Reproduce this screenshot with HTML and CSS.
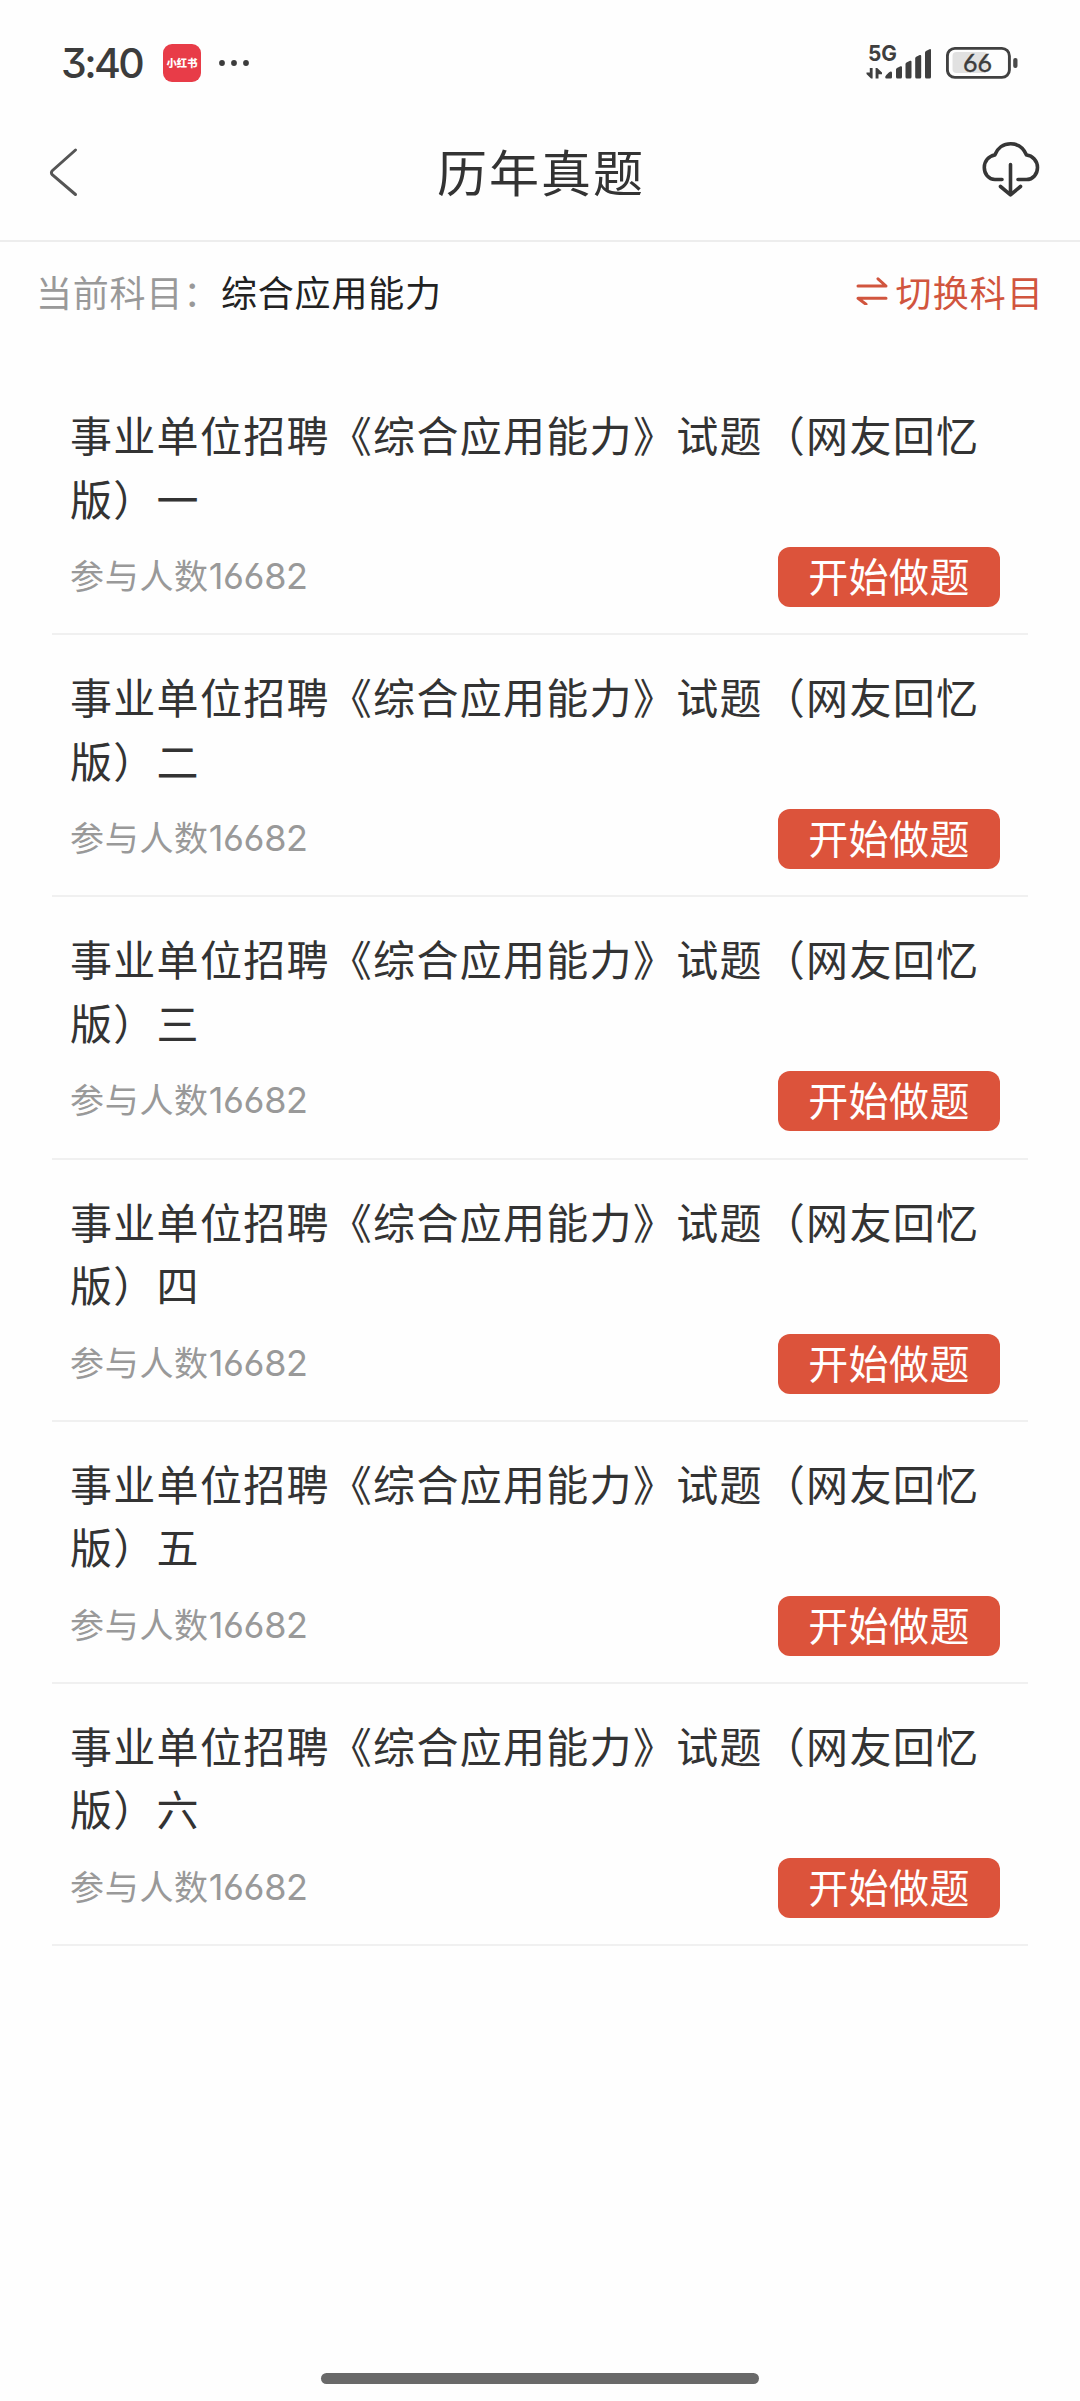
FILE: index.html
```html
<!DOCTYPE html>
<html lang="zh-CN">
<head>
<meta charset="utf-8">
<title>历年真题</title>
<link rel="stylesheet" href="styles.css">
</head>
<body>
<div class="status">
  <span class="time">3:40</span>
  <span class="app-badge">小红书</span>
  <svg class="dots" width="32" height="8" viewBox="0 0 32 8" fill="#3c3c3c"><circle cx="4" cy="4" r="2.9"/><circle cx="16" cy="4" r="2.9"/><circle cx="28" cy="4" r="2.9"/></svg>
  <svg class="signal" width="68" height="47" viewBox="0 0 68 47" fill="#3f3f3f">
    <text class="net" x="2" y="21" textLength="29" lengthAdjust="spacingAndGlyphs">5G</text>
    <path d="M3.800 28h2.800v10.500H5L.5 34v-1.500h3.300zM9.600 38.500V28h1.600l4.800 4.500v1.700h-3.500v4.300z"/>
    <path d="M19.200 37c0-1 4-5.500 5.500-5.500q1.300 0 1.300 1.300v4.400q0 1.300-1.300 1.300h-4.200q-1.300 0-1.300-1.500zM30 29.500q0-1 1-1.600l3.500-1.600q1.500-.5 1.500 1v9.700q0 1.500-1.500 1.500h-3q-1.500 0-1.500-1.500zM39.500 24q0-1 1-1.600l3.500-1.600q1.500-.5 1.500 1v15.200q0 1.500-1.500 1.500h-3q-1.500 0-1.500-1.500zM49.200 18.300q0-1 1-1.600l3.500-1.600q1.500-.5 1.500 1v20.900q0 1.500-1.500 1.500h-3q-1.500 0-1.500-1.500zM59 12.700q0-1 1-1.600l3.500-1.900q1.500-.5 1.500 1V37q0 1.500-1.500 1.500h-3q-1.500 0-1.500-1.500z"/>
  </svg>
  <svg class="battery" width="74" height="34" viewBox="0 0 74 34">
    <rect x="6.500" y="6" width="35" height="21" rx="4" fill="#e1e1e1"/>
    <rect x="1.400" y="2.400" width="62" height="29" rx="7.500" fill="none" stroke="#414141" stroke-width="2.900"/>
    <rect x="67.200" y="12" width="4.300" height="10" rx="2" fill="#4a4a4a"/>
    <text class="level" x="17" y="25.500" textLength="29" lengthAdjust="spacingAndGlyphs">66</text>
  </svg>
</div>
<header class="nav">
  <svg width="32" height="52" viewBox="0 0 32 52" fill="none" stroke="#555" stroke-width="3" stroke-linecap="round" stroke-linejoin="round"><path d="M27.500 4 L4.500 24.500 Q2.300 26.700 4.500 28.900 L27.500 48.500"/></svg>
  <h1 class="nav-title">历年真题</h1>
  <svg class="cloud" width="58" height="56" viewBox="0 0 58 56" fill="none" stroke="#363636" stroke-width="3.600" stroke-linecap="round" stroke-linejoin="round"><path d="M20 38.500h-7C6.500 38.500 2.300 33 2.300 26.500c0-6.500 4.500-11.500 10.500-12.500C15.500 7 21.500 2.800 28.700 2.800S41.500 7 44.500 14c6 .5 11 6 11 12.500 0 6.500-4.500 12-11 12h-8.500M28.500 23.500v29M18.500 45.500l10 8.300 10-8.300"/></svg>
</header>
<div class="subject">
  <span class="label">当前科目：</span><span class="current">综合应用能力</span>
  <span class="switch"><svg width="32" height="28" viewBox="0 0 32 28" fill="none" stroke="#d1553e" stroke-width="3" stroke-linecap="round" stroke-linejoin="round"><path d="M2 9h28L22 1.800M30 21.300H2l8 6"/></svg>切换科目</span>
</div>
<main class="list">
  <article class="item"><h2 class="name">事业单位招聘《综合应用能力》试题（网友回忆版）一</h2><div class="meta"><span class="count">参与人数<b class="num">16682</b></span><button class="start">开始做题</button></div></article>
  <article class="item"><h2 class="name">事业单位招聘《综合应用能力》试题（网友回忆版）二</h2><div class="meta"><span class="count">参与人数<b class="num">16682</b></span><button class="start">开始做题</button></div></article>
  <article class="item"><h2 class="name">事业单位招聘《综合应用能力》试题（网友回忆版）三</h2><div class="meta"><span class="count">参与人数<b class="num">16682</b></span><button class="start">开始做题</button></div></article>
  <article class="item"><h2 class="name">事业单位招聘《综合应用能力》试题（网友回忆版）四</h2><div class="meta"><span class="count">参与人数<b class="num">16682</b></span><button class="start">开始做题</button></div></article>
  <article class="item"><h2 class="name">事业单位招聘《综合应用能力》试题（网友回忆版）五</h2><div class="meta"><span class="count">参与人数<b class="num">16682</b></span><button class="start">开始做题</button></div></article>
  <article class="item"><h2 class="name">事业单位招聘《综合应用能力》试题（网友回忆版）六</h2><div class="meta"><span class="count">参与人数<b class="num">16682</b></span><button class="start">开始做题</button></div></article>
</main>
<footer class="home"><div class="home-bar"></div></footer>
</body>
</html>
```
FILE: styles.css
```css
* { box-sizing: border-box; }
body {
  margin: 0;
  height: 2401px;
  display: flex;
  flex-direction: column;
  background: #fefefe;
  color: #333;
  font-family: "Noto Sans CJK SC", sans-serif;
}
h1, h2 { margin: 0; font-weight: 400; }
svg { display: block; flex: none; }

.status {
  height: 126px;
  display: flex;
  align-items: center;
  padding: 0 60px 0 61px;
}
.time {
  width: 102px;
  font: 500 41px/1 Inter, sans-serif;
  font-feature-settings: "cv09";
  letter-spacing: -2.6px;
  white-space: nowrap;
  color: #3c3c3c;
}
.app-badge {
  width: 38px;
  height: 38px;
  border-radius: 9px;
  background: #e83c48;
  color: #fff;
  font-size: 10.3px;
  font-weight: 900;
  line-height: 37px;
  text-align: center;
  white-space: nowrap;
}
.dots { margin-left: 17px; }
.signal { margin: 0 12px 0 auto; }
.net { font: 700 22px Inter, sans-serif; }
.level { font: 400 25px Lato, sans-serif; fill: #3c3c3c; stroke: #3c3c3c; stroke-width: 0.4px; }

.nav {
  height: 116px;
  display: flex;
  align-items: center;
  justify-content: space-between;
  padding: 0 40px 22px 48px;
  border-bottom: 2px solid #ededed;
}
.nav-title {
  margin: 0 0 4px 20px;
  font-size: 50px;
  line-height: 60px;
  letter-spacing: 2px;
}
.cloud { margin-bottom: 6px; }

.subject {
  height: 98px;
  display: flex;
  align-items: center;
  padding: 0 36px;
  font-size: 36px;
  letter-spacing: 0.8px;
}
.label { width: 185px; color: #999; }
.current { color: #222; }
.switch {
  display: flex;
  align-items: center;
  gap: 8px;
  margin-left: auto;
  color: #d1553e;
  letter-spacing: 1.1px;
}

.list { padding: 33px 52px 0; }
.item {
  height: 262.2px;
  padding: 29px 28px 0 18px;
  border-bottom: 2px solid #f0f0f0;
}
.name {
  font-size: 42px;
  line-height: 63.5px;
  letter-spacing: 1.3px;
}
.meta {
  display: flex;
  align-items: center;
  justify-content: space-between;
  margin-top: 18px;
}
.count {
  padding-bottom: 4px;
  font-size: 34px;
  line-height: 50px;
  letter-spacing: 0.7px;
  color: #999;
}
.num {
  font: 400 36px/1 Inter, sans-serif;
  font-feature-settings: "cv03";
  letter-spacing: -0.4px;
}
.start {
  width: 222px;
  height: 60px;
  padding: 0 0 3px;
  border: 0;
  border-radius: 12px;
  background: #dc533b;
  color: #fff;
  font: 400 40px/57px "Noto Sans CJK SC", sans-serif;
  letter-spacing: 0.4px;
}

.home {
  margin-top: auto;
  padding-bottom: 17px;
  display: flex;
  justify-content: center;
}
.home-bar { width: 438px; height: 11px; border-radius: 6px; background: #696969; }
```
